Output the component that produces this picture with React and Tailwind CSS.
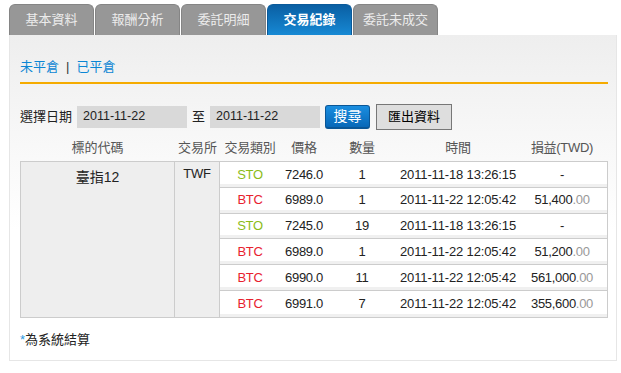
import React from "react";

const font = { fontFamily: '"Liberation Sans", Arial, "Noto Sans CJK TC", sans-serif' };

const tabs = ["基本資料", "報酬分析", "委託明細", "交易紀錄", "委託未成交"];

const rows = [
  { t: "STO", p: "7246.0", q: "1", time: "2011-11-18 13:26:15", pl: null },
  { t: "BTC", p: "6989.0", q: "1", time: "2011-11-22 12:05:42", pl: "51,400" },
  { t: "STO", p: "7245.0", q: "19", time: "2011-11-18 13:26:15", pl: null },
  { t: "BTC", p: "6989.0", q: "1", time: "2011-11-22 12:05:42", pl: "51,200" },
  { t: "BTC", p: "6990.0", q: "11", time: "2011-11-22 12:05:42", pl: "561,000" },
  { t: "BTC", p: "6991.0", q: "7", time: "2011-11-22 12:05:42", pl: "355,600" },
];

function Cols({ a, b, c, d, e, cls = "" }) {
  return (
    <div className={"flex " + cls}>
      <div className="w-[60px] text-center">{a}</div>
      <div className="w-[48px] text-center">{b}</div>
      <div className="w-[68px] text-center">{c}</div>
      <div className="w-[124px] text-center">{d}</div>
      <div className="w-[84px] text-center">{e}</div>
    </div>
  );
}

export default function App() {
  return (
    <div className="w-[621px] h-[373px] bg-white overflow-hidden text-[#333]" style={font}>
      <div className="flex gap-[1px] pl-[9px] pt-[4px]">
        {tabs.map((t, i) =>
          i === 3 ? (
            <div
              key={t}
              className="w-[85px] h-[31px] rounded-t-[6px] bg-gradient-to-b from-[#0a5fa3] to-[#1789d4] border border-b-0 border-[#0a5a9a] flex items-center justify-center text-white font-bold text-[13px]"
            >
              {t}
            </div>
          ) : (
            <div
              key={t}
              className="w-[85px] h-[31px] rounded-t-[6px] bg-[#979797] border border-b-0 border-[#858585] flex items-center justify-center text-[#ececec] text-[13px]"
            >
              {t}
            </div>
          )
        )}
      </div>
      <div className="ml-[9px] w-[608px] h-[326px] border-x border-b border-[#e6e6e6] bg-gradient-to-b from-[#eeeeee] via-[#f7f7f7] via-30% to-white to-60% px-[10px]">
        <div className="pt-[24px] flex items-center text-[13px] leading-[16px] text-[#0b86d4]">
          <span>未平倉</span>
          <span className="mx-[7px] text-[#333]">|</span>
          <span>已平倉</span>
        </div>
        <div className="mt-[7px] h-[2px] w-[588px] bg-[#f5ab00]"></div>
        <div className="mt-[20px] flex items-center h-[25px] text-[13px]">
          <span className="w-[57px] text-[#222]">選擇日期</span>
          <div className="w-[110px] h-[22px] bg-[#d9d9d9] flex items-center pl-[6px] text-[12.5px] text-[#222]">2011-11-22</div>
          <span className="ml-[5px] w-[18px] text-[#222]">至</span>
          <div className="w-[110px] h-[22px] bg-[#d9d9d9] flex items-center pl-[6px] text-[12.5px] text-[#222]">2011-11-22</div>
          <div className="ml-[5px] w-[45px] h-[24px] rounded-[3px] bg-gradient-to-b from-[#1a8ee0] to-[#0868b8] border border-[#0a5696] border-b-2 text-white text-[14px] flex items-center justify-center">搜尋</div>
          <div className="ml-[6px] w-[76px] h-[26px] border border-[#777] bg-[#dedede] text-black text-[13px] flex items-center justify-center">匯出資料</div>
        </div>
        <div className="mt-[7px] flex h-[23px] items-center text-[13px] text-[#555]">
          <div className="w-[155px] text-center">標的代碼</div>
          <div className="w-[45px] text-center">交易所</div>
          <Cols a="交易類別" b="價格" c="數量" d="時間" e="損益(TWD)" cls="tracking-[-0.3px]" />
        </div>
        <div className="mt-[2px] w-[588px] border border-[#cccccc] flex">
          <div className="w-[154px] bg-[#eeeeee] border-r border-[#cccccc] text-center text-[14px] text-[#222] pt-[5px]">臺指12</div>
          <div className="w-[45px] bg-[#eeeeee] border-r border-[#cccccc] text-center text-[13px] tracking-[-0.3px] text-[#222] pt-[2px]">TWF</div>
          <div className="flex-1 bg-white">
            {rows.map((r, i) => (
              <div
                key={i}
                className={
                  "h-[25.8px] flex items-center text-[13px] tracking-[-0.3px] text-[#222] shadow-[inset_0_-3px_0_#f0f0f0] " +
                  (i < rows.length - 1 ? "border-b border-[#cccccc]" : "")
                }
              >
                <Cols
                  a={<span className={r.t === "STO" ? "text-[#8cbc18]" : "text-[#e8212e]"}>{r.t}</span>}
                  b={r.p}
                  c={r.q}
                  d={<span className="tracking-[-0.15px]">{r.time}</span>}
                  e={
                    r.pl ? (
                      <span>
                        {r.pl}
                        <span className="text-[#999]">.00</span>
                      </span>
                    ) : (
                      "-"
                    )
                  }
                />
              </div>
            ))}
          </div>
        </div>
        <div className="mt-[12px] text-[13px] text-[#222]">
          <span className="text-[#2a9ae0]">*</span>為系統結算
        </div>
      </div>
    </div>
  );
}
